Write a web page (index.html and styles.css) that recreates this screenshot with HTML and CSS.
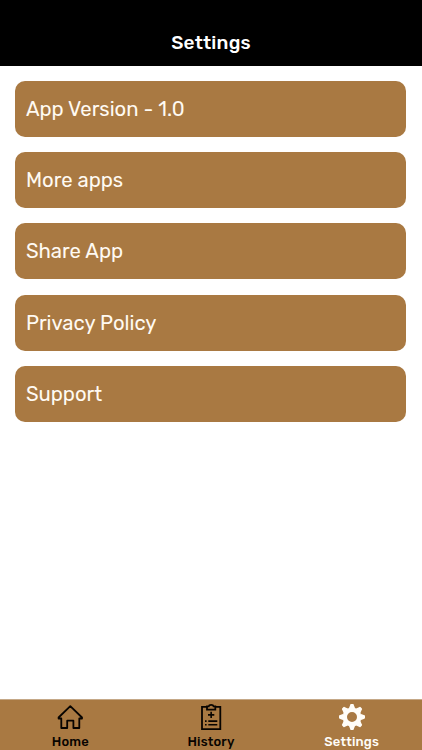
FILE: index.html
```
<!DOCTYPE html>
<html lang="en">
<head>
<meta charset="utf-8">
<meta name="viewport" content="width=device-width, initial-scale=1">
<title>Settings</title>
<link rel="stylesheet" href="styles.css">
</head>
<body>
<div class="app">
  <header class="header"><h1 class="title">Settings</h1></header>
  <main class="list">
    <a class="card"><span>App Version - 1.0</span></a>
    <a class="card"><span>More apps</span></a>
    <a class="card"><span>Share App</span></a>
    <a class="card"><span>Privacy Policy</span></a>
    <a class="card"><span>Support</span></a>
  </main>
  <nav class="tabs">
    <a class="tab">
      <svg class="icon" viewBox="0 0 28 28" fill="none" stroke="currentColor" stroke-width="1.8">
        <path d="M14.3 3.2 2.6 14.5V15.5H5.3V25H11.2V17.7H17.4V25H23.3V15.5H26V14.5Z" stroke-linejoin="round"/>
      </svg>
      <span>Home</span>
    </a>
    <a class="tab">
      <svg class="icon" viewBox="0 0 28 28" fill="none" stroke="currentColor" stroke-width="1.8">
        <path d="M10 3.8H5V26.1H23.3V3.8H18.3"/>
        <path d="M10 6.6V3.4H11.7Q12 1.8 14.15 1.8T16.6 3.4H18.3V6.6Z"/>
        <path d="M14.15 8.8V15M11 11.9H17.3M11.3 18.1H20.3M11.3 21.7H20.3M8 18.1H9.6M8 21.7H9.6" stroke-width="1.6"/>
      </svg>
      <span>History</span>
    </a>
    <a class="tab active">
      <svg class="icon" viewBox="-14 -14 28 28" fill="none" stroke="currentColor">
        <circle r="7.2" stroke-width="4.4"/>
        <g fill="currentColor" stroke="none">
          <path id="teeth" d="M-3.2-8.4-1.9-11.8Q-1.8-13-1-13H1Q1.8-13 1.9-11.8L3.2-8.4ZM-3.2 8.4-1.9 11.8Q-1.8 13-1 13H1Q1.8 13 1.9 11.8L3.2 8.4Z"/>
          <use href="#teeth" transform="rotate(45)"/>
          <use href="#teeth" transform="rotate(90)"/>
          <use href="#teeth" transform="rotate(135)"/>
        </g>
      </svg>
      <span>Settings</span>
    </a>
  </nav>
</div>
</body>
</html>
```
FILE: styles.css
```
* { box-sizing: border-box; }
body {
  margin: 0;
  background: #fff;
  font-family: Rubik, Roboto, sans-serif;
}
.app {
  display: flex;
  flex-direction: column;
  height: 750px;
}
.header {
  height: 66px;
  padding-top: 31px;
  background: #000;
  color: #fff;
  text-align: center;
}
.title {
  margin: 0;
  font-size: 19px;
  line-height: 24px;
  font-weight: 500;
  letter-spacing: 0.2px;
}
.list {
  flex: 1;
  display: flex;
  flex-direction: column;
  gap: 15.25px;
  padding: 14.8px 15.6px 0 15.4px;
}
.card {
  display: flex;
  align-items: center;
  height: 56px;
  padding: 0 10.5px;
  border-radius: 10px;
  background: #a97942;
  color: #fffaf2;
  font-size: 20.3px;
  line-height: 24px;
}
.tabs {
  display: grid;
  grid-template-columns: repeat(3, 1fr);
  height: 51px;
  background: #a97942;
  border-top: 1px solid #c5a887;
}
.tab {
  display: flex;
  flex-direction: column;
  align-items: center;
  padding-top: 3px;
  color: #080400;
  font-size: 13px;
  line-height: 16px;
  font-weight: 500;
  letter-spacing: 0.15px;
}
.tab.active { color: #fffdf8; }
.icon {
  display: block;
  width: 28px;
  height: 28px;
  margin-bottom: 3px;
}
```
